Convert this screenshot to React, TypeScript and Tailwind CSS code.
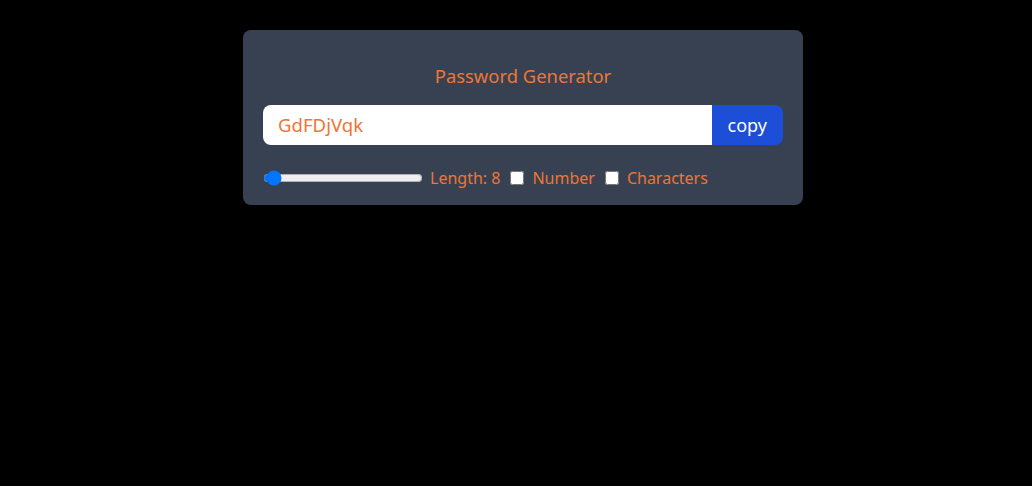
import { useState } from 'react'

export default function App() {
  const [length, setLength] = useState(8)
  const [numberAllowed, setNumberAllowed] = useState(false)
  const [charAllowed, setCharAllowed] = useState(false)

  return (
    <div className="min-h-screen bg-black pt-[30px] pl-[14px] font-['Noto_Sans',sans-serif]">
      <div className="mx-auto w-full max-w-[560px] rounded-lg bg-[#374151] px-5 pt-[32px] pb-[15px] text-[#ee7536]">
        <h1 className="mb-[15px] text-center text-[18.4px] leading-7">Password Generator</h1>
        <div className="flex h-10 overflow-hidden rounded-lg">
          <input
            type="text"
            value="GdFDjVqk"
            readOnly
            placeholder="Password"
            className="w-full bg-white px-[15px] text-[18.6px] outline-none"
          />
          <button className="shrink-0 bg-[#1d4ed8] px-[16px] text-lg text-white">copy</button>
        </div>
        <div className="mt-[21px] flex items-center gap-x-[10px] text-base leading-6">
          <div className="flex items-center gap-x-[7px]">
            <input
              type="range"
              min={6}
              max={100}
              value={length}
              onChange={(e) => setLength(Number(e.target.value))}
              className="w-[160px] cursor-pointer"
            />
            <label>Length: {length}</label>
          </div>
          <div className="flex items-center gap-x-2">
            <input
              type="checkbox"
              checked={numberAllowed}
              onChange={() => setNumberAllowed((p) => !p)}
              className="m-0 h-[14px] w-[14px]"
            />
            <label>Number</label>
          </div>
          <div className="flex items-center gap-x-2">
            <input
              type="checkbox"
              checked={charAllowed}
              onChange={() => setCharAllowed((p) => !p)}
              className="m-0 h-[14px] w-[14px]"
            />
            <label>Characters</label>
          </div>
        </div>
      </div>
    </div>
  )
}
